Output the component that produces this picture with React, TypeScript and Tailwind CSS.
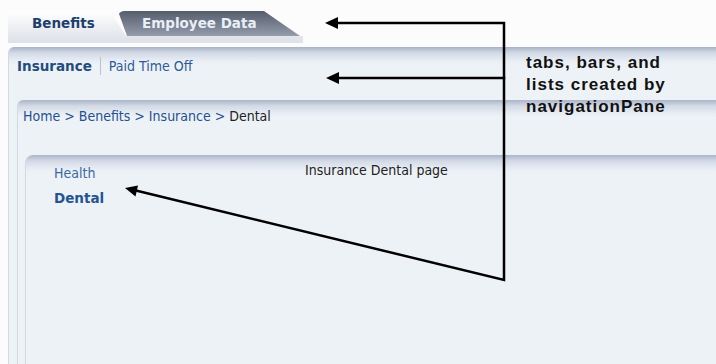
import React from "react";

const uiFont = { fontFamily: '"DejaVu Sans Condensed", "DejaVu Sans", Verdana, sans-serif' };
const boldFont = { fontFamily: '"DejaVu Sans", Verdana, sans-serif' };

export default function App() {
  return (
    <div className="relative w-[716px] h-[364px] overflow-hidden bg-[#fcfcfd]" style={uiFont}>
      {/* Tabs */}
      <div className="pl-2 pt-[11px]">
        <div className="flex w-[295px] flex-col">
          <div className="flex h-[25px]">
            <div className="flex h-full w-[118px] items-center rounded-tl-[7px] bg-gradient-to-b from-white to-[#e3e6ec] pl-[24px] [clip-path:polygon(0_0,102px_0,118px_25px,0_25px)]">
              <span className="text-[13.5px] font-bold text-[#1d3f6e] leading-none" style={boldFont}>Benefits</span>
            </div>
            <div className="-ml-[8px] flex h-full w-[182px] items-center rounded-tl-[6px] bg-gradient-to-b from-[#565e6e] to-[#959dab] pl-[24px] [clip-path:polygon(0_0,146px_0,182px_25px,9px_25px)]">
              <span className="text-[13.5px] font-bold text-[#e9eef7] leading-none" style={boldFont}>Employee Data</span>
            </div>
          </div>
          <div className="h-[7px] bg-gradient-to-b from-[#e3e6ec] to-[#dde1e8]" />
        </div>
      </div>

      {/* navigation bar panel */}
      <div className="ml-2 mt-[4px] h-[317px] rounded-tl-[6px] border-l border-[#d2d9e2] bg-[#edf2f7] bg-[linear-gradient(to_bottom,#a8b3c6_0px,#d3dae6_6px,#e9eef5_14px,#edf2f7_18px)]">
        <div className="flex h-[53px] items-start pl-[8px] pt-[11px] text-[14px] leading-[16px]">
          <span className="text-[13.5px] font-bold text-[#1f4d80]" style={boldFont}>Insurance</span>
          <span className="mx-[8px] mt-[-1px] h-[18px] w-px bg-[#b9c3d0]" />
          <span className="text-[#2b5b96]">Paid Time Off</span>
        </div>

        {/* breadcrumb panel */}
        <div className="ml-[8px] h-[264px] rounded-tl-[6px] border-l border-[#d2d9e2] bg-[#edf2f7] bg-[linear-gradient(to_bottom,#aab5c8_0px,#d3dae6_6px,#e9eef5_14px,#edf2f7_18px)]">
          <div className="h-[55px] pl-[5px] pt-[8px] text-[14px] leading-[16px]">
            <span className="text-[#24508f]">Home &gt; Benefits &gt; Insurance &gt; </span>
            <span className="text-[#222]">Dental</span>
          </div>

          {/* inner panel */}
          <div className="ml-[7px] h-[209px] rounded-tl-[8px] border-l border-[#d2d9e2] bg-[#edf2f7] bg-[linear-gradient(to_bottom,#aab5c8_0px,#d3dae6_6px,#e9eef5_14px,#edf2f7_18px)]">
            <div className="flex pt-[7px] text-[14px] leading-[16px]">
              <div className="flex w-[279px] flex-col gap-[9px] pl-[28px] pt-[3px]">
                <span className="text-[#3a68a6]">Health</span>
                <span className="text-[13.5px] font-bold text-[#245493]" style={boldFont}>Dental</span>
              </div>
              <span className="text-[#222]">Insurance Dental page</span>
            </div>
          </div>
        </div>
      </div>

      {/* annotation text */}
      <div
        className="absolute left-[526px] top-[52px] text-[17px] font-bold leading-[22px] tracking-[1px] text-[#111]"
        style={{ fontFamily: '"Liberation Sans", Arial, sans-serif' }}
      >
        <div>tabs, bars, and</div>
        <div>lists created by</div>
        <div>navigationPane</div>
      </div>

      {/* arrows */}
      <svg className="pointer-events-none absolute left-0 top-0" width="716" height="364" viewBox="0 0 716 364">
        <g stroke="#000" strokeWidth="2.5" fill="none" strokeLinecap="square">
          <path d="M336 23 H504 V280 L136 190.5" />
          <path d="M336 78 H504" />
        </g>
        <g fill="#000">
          <polygon points="325,23 338,17 338,29" />
          <polygon points="326,78 339,72 339,84" />
          <polygon points="125,188 138,185.5 135.5,196.5" />
        </g>
      </svg>
    </div>
  );
}
